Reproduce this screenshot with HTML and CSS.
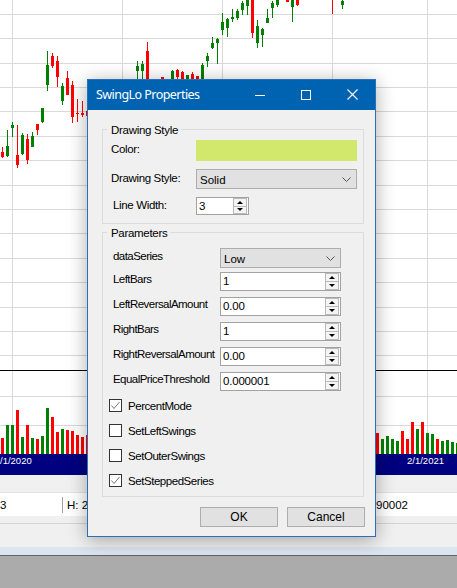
FILE: index.html
```html
<!DOCTYPE html>
<html>
<head>
<meta charset="utf-8">
<title>SwingLo Properties</title>
<link rel="stylesheet" href="styles.css">
</head>
<body>
<div class="screen">
  <svg class="chart" width="457" height="454" viewBox="0 0 457 454" shape-rendering="crispEdges">
    <g class="grid" fill="#d9d9d9">
      <rect x="0" y="14" width="457" height="1"/>
      <rect x="0" y="38" width="457" height="1"/>
      <rect x="0" y="63" width="457" height="1"/>
      <rect x="0" y="87" width="457" height="1"/>
      <rect x="0" y="111" width="457" height="1"/>
      <rect x="0" y="136" width="457" height="1"/>
      <rect x="0" y="160" width="457" height="1"/>
      <rect x="0" y="185" width="457" height="1"/>
      <rect x="0" y="209" width="457" height="1"/>
      <rect x="0" y="233" width="457" height="1"/>
      <rect x="0" y="258" width="457" height="1"/>
      <rect x="0" y="282" width="457" height="1"/>
      <rect x="0" y="307" width="457" height="1"/>
      <rect x="0" y="331" width="457" height="1"/>
      <rect x="0" y="355" width="457" height="1"/>
      <rect x="0" y="396" width="457" height="1"/>
      <rect x="0" y="425" width="457" height="1"/>
      <rect x="12" y="0" width="1" height="454"/>
      <rect x="122" y="0" width="1" height="454"/>
      <rect x="222" y="0" width="1" height="454"/>
      <rect x="332" y="0" width="1" height="454"/>
      <rect x="427" y="0" width="1" height="454"/>
    </g>
    <rect x="0" y="370" width="457" height="1" fill="#000"/>
    <g class="up" fill="#008000">
      <rect x="7" y="130" width="1" height="27"/><rect x="6" y="146" width="3" height="10"/>
      <rect x="12" y="122" width="1" height="15"/><rect x="11" y="125" width="3" height="3"/>
      <rect x="22" y="133" width="1" height="22"/><rect x="21" y="135" width="3" height="19"/>
      <rect x="32" y="132" width="1" height="15"/><rect x="31" y="136" width="3" height="11"/>
      <rect x="42" y="108" width="1" height="15"/><rect x="41" y="108" width="3" height="14"/>
      <rect x="47" y="51" width="1" height="40"/><rect x="46" y="65" width="3" height="20"/>
      <rect x="62" y="83" width="1" height="22"/><rect x="61" y="86" width="3" height="15"/>
      <rect x="137" y="61" width="1" height="29"/><rect x="136" y="66" width="3" height="5"/>
      <rect x="142" y="61" width="1" height="29"/><rect x="141" y="64" width="3" height="7"/>
      <rect x="172" y="70" width="1" height="20"/><rect x="171" y="71" width="3" height="19"/>
      <rect x="186" y="75" width="3" height="15"/>
      <rect x="202" y="63" width="1" height="27"/><rect x="201" y="65" width="3" height="25"/>
      <rect x="207" y="53" width="1" height="14"/><rect x="206" y="56" width="3" height="5"/>
      <rect x="212" y="37" width="1" height="12"/><rect x="211" y="43" width="3" height="5"/>
      <rect x="217" y="38" width="1" height="26"/><rect x="216" y="39" width="3" height="4"/>
      <rect x="222" y="13" width="1" height="22"/><rect x="221" y="22" width="3" height="8"/>
      <rect x="227" y="18" width="1" height="19"/><rect x="226" y="19" width="3" height="9"/>
      <rect x="232" y="9" width="1" height="13"/><rect x="231" y="17" width="3" height="2"/>
      <rect x="237" y="9" width="1" height="11"/><rect x="236" y="11" width="3" height="7"/>
      <rect x="242" y="1" width="1" height="14"/><rect x="241" y="3" width="3" height="7"/>
      <rect x="247" y="0" width="1" height="15"/><rect x="246" y="0" width="3" height="6"/>
      <rect x="257" y="20" width="1" height="28"/><rect x="256" y="26" width="3" height="17"/>
      <rect x="262" y="28" width="1" height="19"/><rect x="261" y="29" width="3" height="6"/>
      <rect x="267" y="9" width="1" height="14"/><rect x="266" y="18" width="3" height="5"/>
      <rect x="272" y="1" width="1" height="17"/><rect x="271" y="3" width="3" height="5"/>
      <rect x="277" y="0" width="1" height="7"/><rect x="276" y="0" width="3" height="5"/>
      <rect x="292" y="0" width="1" height="22"/><rect x="291" y="0" width="3" height="7"/>
      <rect x="342" y="0" width="1" height="9"/><rect x="341" y="1" width="3" height="4"/>
    </g>
    <g class="down" fill="#ff0000">
      <rect x="2" y="147" width="1" height="11"/><rect x="1" y="152" width="3" height="5"/>
      <rect x="17" y="125" width="1" height="43"/><rect x="16" y="155" width="3" height="10"/>
      <rect x="27" y="134" width="1" height="30"/><rect x="26" y="139" width="3" height="21"/>
      <rect x="37" y="124" width="1" height="11"/><rect x="36" y="124" width="3" height="6"/>
      <rect x="52" y="53" width="1" height="15"/><rect x="51" y="56" width="3" height="10"/>
      <rect x="57" y="56" width="1" height="31"/><rect x="56" y="61" width="3" height="16"/>
      <rect x="67" y="71" width="1" height="24"/><rect x="66" y="78" width="3" height="17"/>
      <rect x="72" y="81" width="1" height="42"/><rect x="71" y="85" width="3" height="32"/>
      <rect x="77" y="99" width="1" height="23"/><rect x="76" y="113" width="3" height="1"/>
      <rect x="82" y="101" width="1" height="16"/><rect x="81" y="113" width="3" height="2"/>
      <rect x="86" y="111" width="3" height="5"/>
      <rect x="147" y="42" width="1" height="48"/><rect x="146" y="51" width="3" height="39"/>
      <rect x="161" y="77" width="3" height="13"/>
      <rect x="177" y="69" width="1" height="21"/><rect x="176" y="70" width="3" height="7"/>
      <rect x="182" y="71" width="1" height="19"/><rect x="181" y="72" width="3" height="8"/>
      <rect x="192" y="72" width="1" height="18"/><rect x="191" y="74" width="3" height="6"/>
      <rect x="196" y="76" width="3" height="14"/>
      <rect x="252" y="0" width="1" height="38"/><rect x="251" y="0" width="3" height="33"/>
      <rect x="286" y="0" width="3" height="2"/>
      <rect x="297" y="0" width="1" height="6"/><rect x="296" y="0" width="3" height="5"/>
      <rect x="332" y="0" width="1" height="14"/>
    </g>
    <g class="vol-up" fill="#008000">
      <rect x="6" y="425" width="3" height="29"/>
      <rect x="11" y="425" width="3" height="29"/>
      <rect x="21" y="437" width="3" height="17"/>
      <rect x="31" y="438" width="3" height="16"/>
      <rect x="41" y="436" width="3" height="18"/>
      <rect x="46" y="408" width="3" height="46"/>
      <rect x="61" y="429" width="3" height="25"/>
      <rect x="381" y="439" width="3" height="15"/>
      <rect x="386" y="436" width="3" height="18"/>
      <rect x="391" y="439" width="3" height="15"/>
      <rect x="396" y="441" width="3" height="13"/>
      <rect x="416" y="429" width="3" height="25"/>
      <rect x="426" y="433" width="3" height="21"/>
      <rect x="431" y="434" width="3" height="20"/>
      <rect x="441" y="441" width="3" height="13"/>
      <rect x="446" y="440" width="3" height="14"/>
      <rect x="451" y="442" width="3" height="12"/>
      <rect x="456" y="443" width="3" height="11"/>
    </g>
    <g class="vol-down" fill="#ff0000">
      <rect x="1" y="438" width="3" height="16"/>
      <rect x="16" y="410" width="3" height="44"/>
      <rect x="26" y="425" width="3" height="29"/>
      <rect x="36" y="439" width="3" height="15"/>
      <rect x="51" y="417" width="3" height="37"/>
      <rect x="56" y="432" width="3" height="22"/>
      <rect x="66" y="430" width="3" height="24"/>
      <rect x="71" y="431" width="3" height="23"/>
      <rect x="76" y="435" width="3" height="19"/>
      <rect x="81" y="437" width="3" height="17"/>
      <rect x="86" y="435" width="3" height="19"/>
      <rect x="376" y="433" width="3" height="21"/>
      <rect x="401" y="431" width="3" height="23"/>
      <rect x="406" y="439" width="3" height="15"/>
      <rect x="411" y="422" width="3" height="32"/>
      <rect x="421" y="422" width="3" height="32"/>
      <rect x="436" y="439" width="3" height="15"/>
    </g>
  </svg>

  <div class="axis">
    <span class="date date-a">/1/2020</span>
    <span class="date date-b">2/1/2021</span>
  </div>
  <div class="band"></div>
  <div class="status">
    <span class="cell cell-a">3</span>
    <span class="cell cell-b">H: 2</span>
    <span class="cell cell-c">90002</span>
  </div>
  <div class="band2"></div>
  <div class="tabs"></div>
  <div class="edge"></div>

  <div class="dialog">
    <div class="titlebar">
      <span class="title">SwingLo Properties</span>
      <span class="tbtn"><svg width="10" height="10" viewBox="0 0 10 10"><path d="M0 5.5H10" stroke="#fff" stroke-width="1"/></svg></span>
      <span class="tbtn"><svg width="10" height="10" viewBox="0 0 10 10"><rect x="0.5" y="0.5" width="9" height="9" fill="none" stroke="#fff" stroke-width="1"/></svg></span>
      <span class="tbtn"><svg width="11" height="11" viewBox="0 0 11 11"><path d="M0.5 0.5L10.5 10.5M10.5 0.5L0.5 10.5" stroke="#fff" stroke-width="1.1"/></svg></span>
    </div>
    <div class="body">
      <div class="group g-style">
        <div class="legend">Drawing Style</div>
        <div class="frow r-color"><span class="lbl">Color:</span><span class="swatch"></span></div>
        <div class="frow r-style"><span class="lbl">Drawing Style:</span>
          <div class="combo wide"><span>Solid</span><svg class="chev" width="9" height="5" viewBox="0 0 9 5"><path d="M0.5 0.5L4.5 4.5L8.5 0.5" fill="none" stroke="#555" stroke-width="1"/></svg></div>
        </div>
        <div class="frow r-width"><span class="lbl lbl-w">Line Width:</span>
          <div class="spin small"><span class="val">3</span><span class="arrows"><span class="arr"><i class="tri-up"></i></span><span class="arr"><i class="tri-dn"></i></span></span></div>
        </div>
      </div>

      <div class="group g-params">
        <div class="legend">Parameters</div>
        <div class="prow first"><span class="plbl">dataSeries</span>
          <div class="combo param"><span>Low</span><svg class="chev" width="9" height="5" viewBox="0 0 9 5"><path d="M0.5 0.5L4.5 4.5L8.5 0.5" fill="none" stroke="#555" stroke-width="1"/></svg></div>
        </div>
        <div class="prow second"><span class="plbl">LeftBars</span>
          <div class="spin param"><span class="val">1</span><span class="arrows"><span class="arr"><i class="tri-up"></i></span><span class="arr"><i class="tri-dn"></i></span></span></div>
        </div>
        <div class="prow"><span class="plbl">LeftReversalAmount</span>
          <div class="spin param"><span class="val">0.00</span><span class="arrows"><span class="arr"><i class="tri-up"></i></span><span class="arr"><i class="tri-dn"></i></span></span></div>
        </div>
        <div class="prow"><span class="plbl">RightBars</span>
          <div class="spin param"><span class="val">1</span><span class="arrows"><span class="arr"><i class="tri-up"></i></span><span class="arr"><i class="tri-dn"></i></span></span></div>
        </div>
        <div class="prow"><span class="plbl">RightReversalAmount</span>
          <div class="spin param"><span class="val">0.00</span><span class="arrows"><span class="arr"><i class="tri-up"></i></span><span class="arr"><i class="tri-dn"></i></span></span></div>
        </div>
        <div class="prow"><span class="plbl">EqualPriceThreshold</span>
          <div class="spin param"><span class="val">0.000001</span><span class="arrows"><span class="arr"><i class="tri-up"></i></span><span class="arr"><i class="tri-dn"></i></span></span></div>
        </div>
        <div class="check first-check"><span class="box"><svg width="11" height="11" viewBox="0 0 11 11"><path d="M1.5 5.5L4 8.5L9.5 2" fill="none" stroke="#777" stroke-width="1"/></svg></span>PercentMode</div>
        <div class="check"><span class="box"></span>SetLeftSwings</div>
        <div class="check"><span class="box"></span>SetOuterSwings</div>
        <div class="check"><span class="box"><svg width="11" height="11" viewBox="0 0 11 11"><path d="M1.5 5.5L4 8.5L9.5 2" fill="none" stroke="#777" stroke-width="1"/></svg></span>SetSteppedSeries</div>
      </div>

      <div class="actions">
        <button class="btn" type="button">OK</button>
        <button class="btn" type="button">Cancel</button>
      </div>
    </div>
  </div>
</div>
</body>
</html>
```

FILE: styles.css
```css
* { box-sizing: border-box; }
html, body { margin: 0; padding: 0; }
body {
  width: 457px;
  height: 588px;
  overflow: hidden;
  font-family: "Liberation Sans", Arial, sans-serif;
}
.screen {
  position: relative;
  width: 457px;
  height: 588px;
  background: #ababab;
  overflow: hidden;
}
.chart { display: block; background: #fff; }

.axis {
  height: 21px;
  background: #000080;
  color: #fff;
  font-size: 9.5px;
  line-height: 12px;
  padding-top: 1px;
  display: flex;
  justify-content: space-between;
  white-space: nowrap;
}
.date-a { margin-left: 0; }
.date-b { margin-right: 13px; }

.band { height: 17px; background: #f0f0f0; }
.status {
  height: 24px;
  background: #fff;
  border-top: 1px solid #e2e2e2;
  display: flex;
  align-items: center;
  font-size: 11.5px;
  color: #000;
  white-space: nowrap;
}
.cell { height: 16px; line-height: 16px; }
.cell-a { width: 62px; }
.cell-b { width: 314px; border-left: 1px solid #a0a0a0; padding-left: 4px; }
.cell-c { padding-left: 0; }
.band2 { height: 8px; background: #f0f0f0; border-bottom: 1px solid #d4d4d4; }
.tabs { height: 23px; background: #f0f0f0; }
.edge { height: 9px; background: #dbe5f1; border-bottom: 1px solid #646464; }

/* dialog */
.dialog {
  position: absolute;
  left: 87px;
  top: 79px;
  width: 289px;
  background: #f0f0f0;
  border: 1px solid #2a70b4;
  box-shadow: 0 3px 18px rgba(0, 0, 0, 0.33);
  font-size: 11px;
  color: #000;
}
.titlebar {
  height: 30px;
  background: #0063b1;
  color: #fff;
  display: flex;
  align-items: center;
}
.title {
  flex: 1;
  padding-left: 8px;
  padding-bottom: 1px;
  font-family: "Noto Sans", "Open Sans", sans-serif;
  font-size: 12.5px;
  letter-spacing: -0.55px;
  white-space: nowrap;
}
.tbtn {
  width: 46px;
  height: 30px;
  display: flex;
  align-items: center;
  justify-content: center;
  padding-bottom: 1px;
}
.tbtn svg { display: block; }

.body { padding: 19px 11px 9px 14px; }

.group {
  border: 1px solid #dcdcdc;
  padding: 0 5px 8px 8px;
}
.g-params { margin-top: 8px; padding-bottom: 3px; }
.legend {
  width: max-content;
  margin: -7px 0 0 -4px;
  padding: 0 3px 0 4px;
  background: #f0f0f0;
  line-height: 14px;
  font-size: 11.5px;
  letter-spacing: -0.3px;
}

.frow { display: flex; align-items: center; }
.r-color { margin-top: 3px; height: 21px; }
.r-style { margin-top: 8px; height: 20px; }
.r-width { margin-top: 8px; height: 18px; }
.lbl { width: 85px; margin-bottom: 3px; font-size: 11.5px; letter-spacing: -0.35px; white-space: nowrap; }
.lbl-w { padding-left: 2px; }
.swatch { width: 161px; height: 21px; background: #d2e86d; }

.combo {
  display: flex;
  align-items: center;
  justify-content: space-between;
  background: #e1e1e1;
  border: 1px solid #adadad;
  padding: 0 5px 0 3px;
  font-size: 11.5px;
}
.combo span { padding-top: 1px; }
.combo.wide { width: 161px; height: 20px; }
.combo.param { width: 121px; height: 20px; }
.chev { display: block; }

.spin {
  display: flex;
  background: #fff;
  border: 1px solid #a2a2a2;
  font-size: 11.5px;
}
.spin.small { width: 53px; height: 18px; }
.spin.param { width: 121px; height: 19px; }
.val { flex: 1; padding-left: 2px; line-height: 16px; letter-spacing: -0.2px; }
.arrows {
  width: 15px;
  display: flex;
  flex-direction: column;
  padding: 0 1px 0 0;
}
.arr {
  flex: 1;
  display: flex;
  align-items: center;
  justify-content: center;
  background: #f4f4f4;
  border: 1px solid #b9b9b9;
}
.arr + .arr { border-top: 0; }
.tri-up, .tri-dn {
  display: block;
  width: 0;
  height: 0;
  border-left: 3px solid transparent;
  border-right: 3px solid transparent;
}
.tri-up { border-bottom: 3px solid #000; }
.tri-dn { border-top: 3px solid #000; }

.prow { display: flex; align-items: center; height: 19px; margin-top: 6px; }
.prow.first { height: 20px; margin-top: 8px; }
.prow.second { margin-top: 4px; }
.plbl { width: 109px; padding-left: 2px; margin-bottom: 5px; font-size: 11.5px; letter-spacing: -0.55px; white-space: nowrap; }

.check {
  display: flex;
  align-items: center;
  height: 25px;
  margin-left: -2px;
  font-size: 11.5px;
  letter-spacing: -0.45px;
  white-space: nowrap;
}
.first-check { margin-top: 2px; }
.box {
  width: 13px;
  height: 13px;
  border: 1px solid #333;
  background: #fff;
  margin-right: 6px;
  display: flex;
  align-items: center;
  justify-content: center;
}
.box svg { display: block; }

.actions {
  display: flex;
  justify-content: flex-end;
  gap: 9px;
  margin-top: 10px;
  margin-right: -1px;
}
.btn {
  width: 78px;
  height: 20px;
  padding: 0;
  background: #e1e1e1;
  border: 1px solid #adadad;
  font-family: "Liberation Sans", Arial, sans-serif;
  font-size: 12px;
  color: #000;
}
```
